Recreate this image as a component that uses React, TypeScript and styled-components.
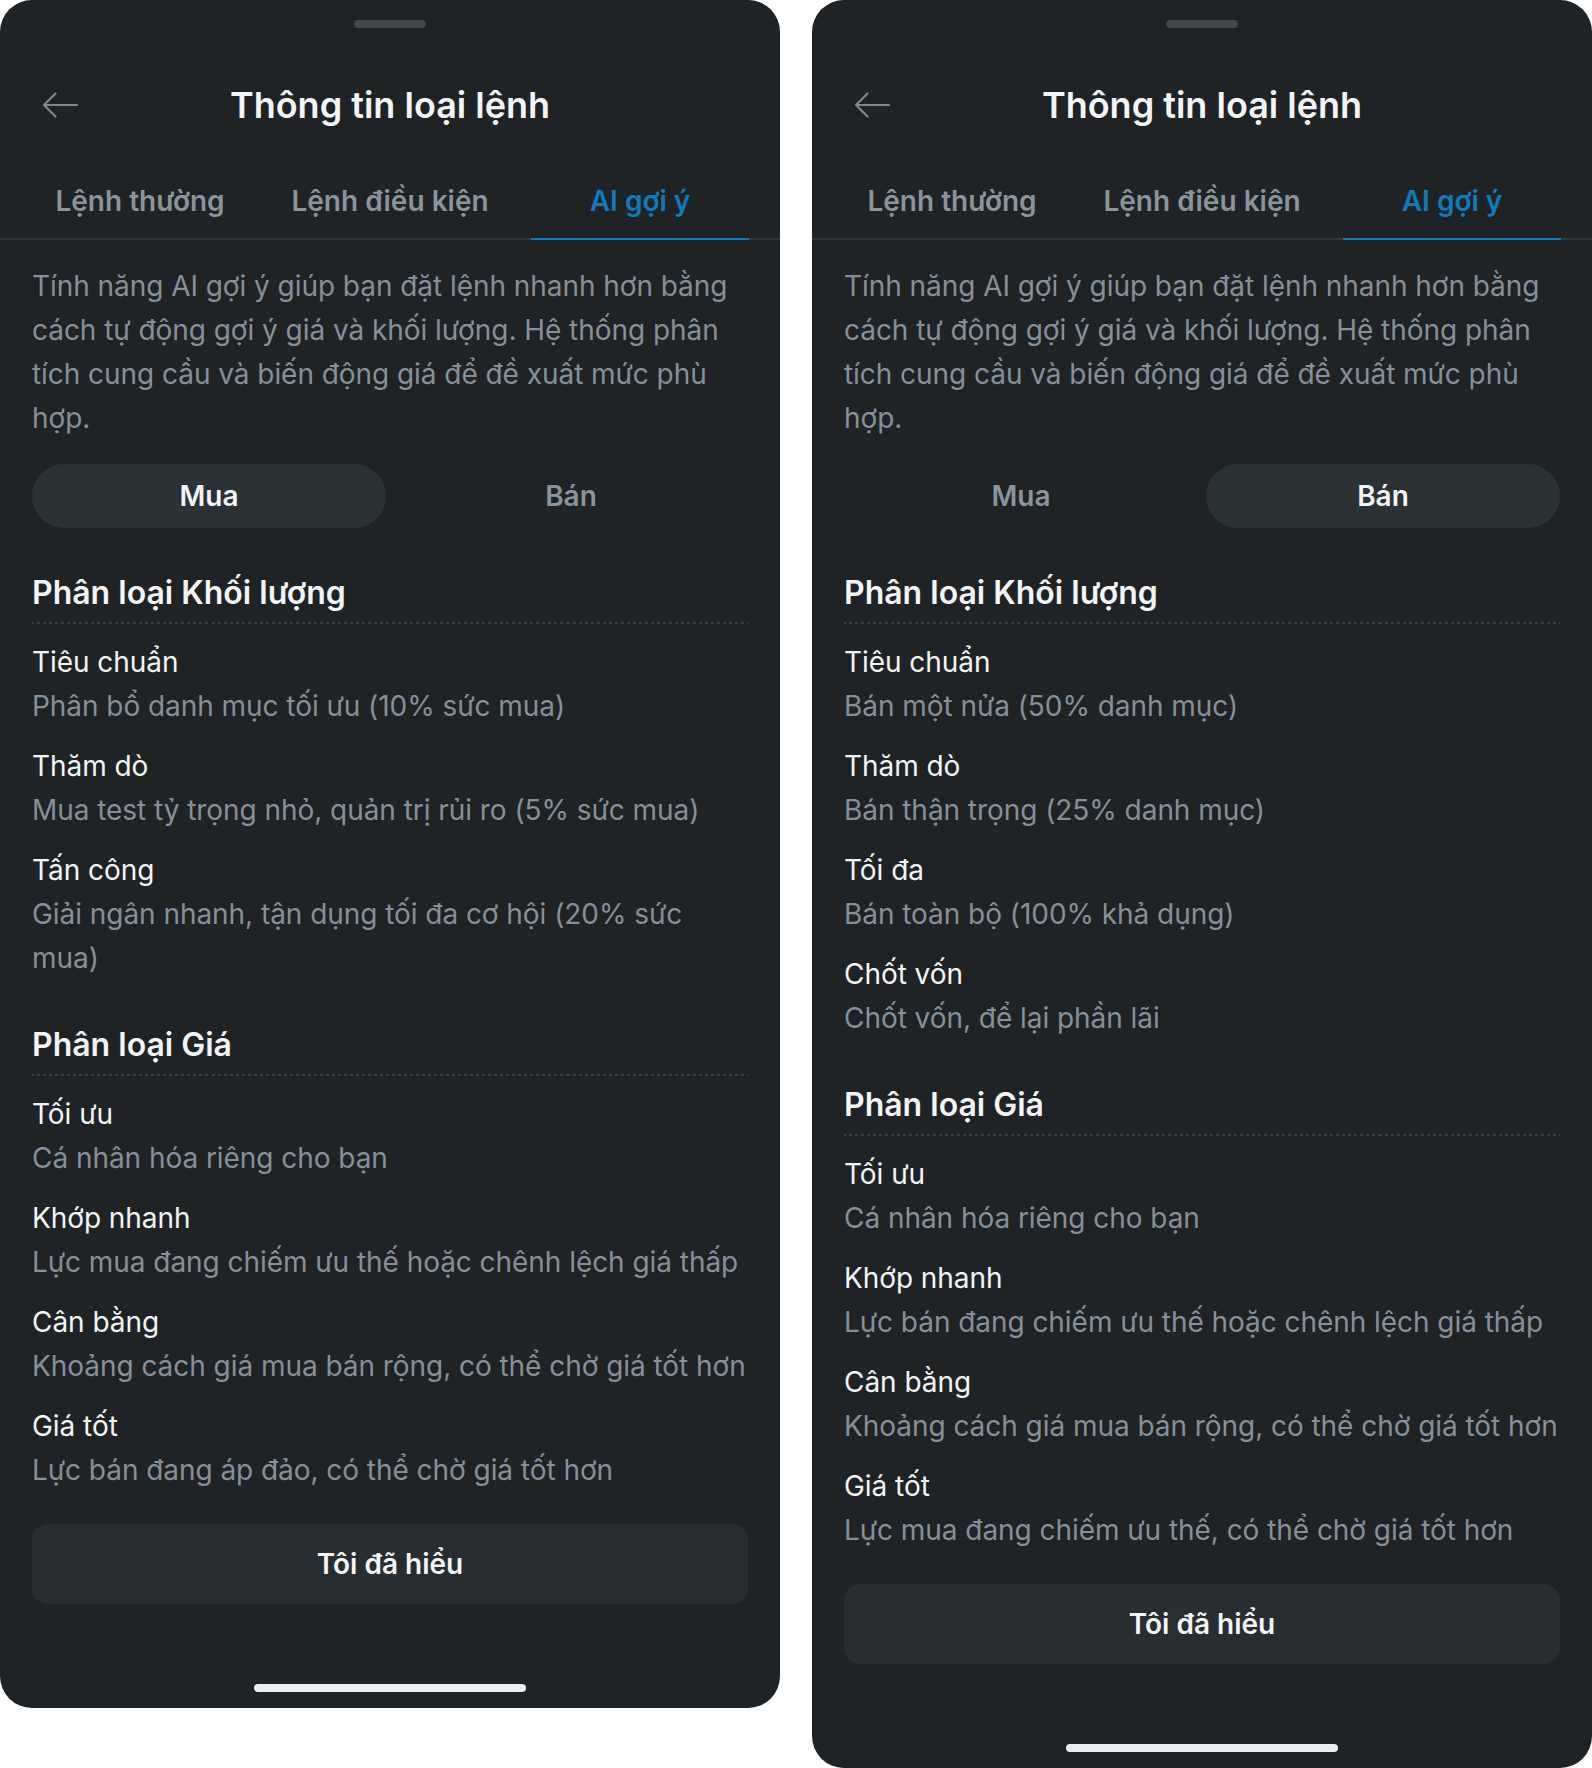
import { styled, createGlobalStyle } from "styled-components";

const GlobalStyle = createGlobalStyle`
  body {
    margin: 0;
    background: #ffffff;
    font-family: Inter, "Noto Sans", "Liberation Sans", sans-serif;
    -webkit-font-smoothing: antialiased;
  }
`;

const Page = styled.div`
  display: flex;
  gap: 32px;
  align-items: flex-start;
`;

const Sheet = styled.div`
  width: 780px;
  background: #1f2326;
  border-radius: 32px;
  display: flex;
  flex-direction: column;
  padding-bottom: 16px;
`;

const Handle = styled.div`
  width: 72px;
  height: 8px;
  border-radius: 4px;
  background: #40474d;
  margin: 20px auto 0;
`;

const Header = styled.div`
  height: 154px;
  display: grid;
  grid-template-columns: 1fr auto 1fr;
  align-items: center;
`;

const BackButton = styled.div`
  padding-left: 42px;
  display: flex;
  align-items: center;
  color: #7d8890;
`;

const Title = styled.h1`
  margin: 0;
  font-size: 36px;
  line-height: 44px;
  font-weight: 600;
  color: #f2f4f5;
`;

const Tabs = styled.div`
  display: grid;
  grid-template-columns: repeat(3, 1fr);
  padding: 0 15px;
  border-bottom: 2px solid #30363a;
`;

const Tab = styled.div<{ $active?: boolean }>`
  position: relative;
  text-align: center;
  padding: 2px 0 20px;
  font-size: 28px;
  line-height: 34px;
  font-weight: 600;
  color: ${(p) => (p.$active ? "#1479b8" : "#8a949c")};

  &::after {
    content: "";
    display: ${(p) => (p.$active ? "block" : "none")};
    position: absolute;
    left: 16px;
    right: 16px;
    bottom: -2px;
    height: 2px;
    background: #1479b8;
  }
`;

const Body = styled.div`
  padding: 24px 32px 0;
  display: flex;
  flex-direction: column;
`;

const Intro = styled.p`
  margin: 0;
  font-size: 28px;
  line-height: 44px;
  letter-spacing: -0.05px;
  color: #85909a;
`;

const Segment = styled.div`
  margin-top: 24px;
  display: grid;
  grid-template-columns: 1fr 1fr;
  gap: 8px;
`;

const SegmentItem = styled.div<{ $active?: boolean }>`
  height: 64px;
  border-radius: 32px;
  display: flex;
  align-items: center;
  justify-content: center;
  font-size: 28px;
  font-weight: 600;
  background: ${(p) => (p.$active ? "#2b3236" : "transparent")};
  color: ${(p) => (p.$active ? "#f2f4f5" : "#8a949c")};
`;

const Section = styled.section`
  margin-top: 45px;
`;

const SectionTitle = styled.h2`
  margin: 0;
  font-size: 32px;
  line-height: 40px;
  font-weight: 600;
  color: #f2f4f5;
  padding-bottom: 9px;
  border-bottom: 2px dashed transparent;
  border-image: repeating-linear-gradient(
      to right,
      #3a4147 0 3px,
      transparent 3px 6px
    )
    1;
`;

const ItemList = styled.div`
  margin-top: 16px;
  display: flex;
  flex-direction: column;
  gap: 16px;
`;

const Item = styled.div`
  display: flex;
  flex-direction: column;
`;

const ItemName = styled.div`
  font-size: 28px;
  line-height: 44px;
  letter-spacing: -0.05px;
  color: #f2f4f5;
`;

const ItemDesc = styled.div`
  font-size: 28px;
  line-height: 44px;
  letter-spacing: -0.05px;
  color: #85909a;
`;

const ConfirmButton = styled.button`
  margin-top: 32px;
  height: 80px;
  width: 100%;
  border: none;
  border-radius: 16px;
  background: #272d31;
  color: #f2f4f5;
  font-family: inherit;
  font-size: 28px;
  font-weight: 600;
`;

const HomeIndicator = styled.div`
  width: 272px;
  height: 8px;
  border-radius: 4px;
  background: #e9edf0;
  margin: 80px auto 0;
`;

type Entry = [string, string];

const volumeBuy: Entry[] = [
  ["Tiêu chuẩn", "Phân bổ danh mục tối ưu (10% sức mua)"],
  ["Thăm dò", "Mua test tỷ trọng nhỏ, quản trị rủi ro (5% sức mua)"],
  ["Tấn công", "Giải ngân nhanh, tận dụng tối đa cơ hội (20% sức mua)"],
];

const volumeSell: Entry[] = [
  ["Tiêu chuẩn", "Bán một nửa (50% danh mục)"],
  ["Thăm dò", "Bán thận trọng (25% danh mục)"],
  ["Tối đa", "Bán toàn bộ (100% khả dụng)"],
  ["Chốt vốn", "Chốt vốn, để lại phần lãi"],
];

const priceBuy: Entry[] = [
  ["Tối ưu", "Cá nhân hóa riêng cho bạn"],
  ["Khớp nhanh", "Lực mua đang chiếm ưu thế hoặc chênh lệch giá thấp"],
  ["Cân bằng", "Khoảng cách giá mua bán rộng, có thể chờ giá tốt hơn"],
  ["Giá tốt", "Lực bán đang áp đảo, có thể chờ giá tốt hơn"],
];

const priceSell: Entry[] = [
  ["Tối ưu", "Cá nhân hóa riêng cho bạn"],
  ["Khớp nhanh", "Lực bán đang chiếm ưu thế hoặc chênh lệch giá thấp"],
  ["Cân bằng", "Khoảng cách giá mua bán rộng, có thể chờ giá tốt hơn"],
  ["Giá tốt", "Lực mua đang chiếm ưu thế, có thể chờ giá tốt hơn"],
];

function BackArrow() {
  return (
    <svg width="36" height="26" viewBox="0 0 36 26" fill="none">
      <path
        d="M13.5 1.5 L2 13 L13.5 24.5 M2 13 H35"
        stroke="currentColor"
        strokeWidth="2.2"
        strokeLinecap="round"
        strokeLinejoin="round"
      />
    </svg>
  );
}

function Group({ title, items }: { title: string; items: Entry[] }) {
  return (
    <Section>
      <SectionTitle>{title}</SectionTitle>
      <ItemList>
        {items.map(([name, desc]) => (
          <Item key={name}>
            <ItemName>{name}</ItemName>
            <ItemDesc>{desc}</ItemDesc>
          </Item>
        ))}
      </ItemList>
    </Section>
  );
}

function InfoSheet({ side }: { side: "buy" | "sell" }) {
  const buy = side === "buy";
  return (
    <Sheet>
      <Handle />
      <Header>
        <BackButton>
          <BackArrow />
        </BackButton>
        <Title>Thông tin loại lệnh</Title>
        <div />
      </Header>
      <Tabs>
        <Tab>Lệnh thường</Tab>
        <Tab>Lệnh điều kiện</Tab>
        <Tab $active>AI gợi ý</Tab>
      </Tabs>
      <Body>
        <Intro>
          Tính năng AI gợi ý giúp bạn đặt lệnh nhanh hơn bằng cách tự động gợi
          ý giá và khối lượng. Hệ thống phân tích cung cầu và biến động giá để
          đề xuất mức phù hợp.
        </Intro>
        <Segment>
          <SegmentItem $active={buy}>Mua</SegmentItem>
          <SegmentItem $active={!buy}>Bán</SegmentItem>
        </Segment>
        <Group title="Phân loại Khối lượng" items={buy ? volumeBuy : volumeSell} />
        <Group title="Phân loại Giá" items={buy ? priceBuy : priceSell} />
        <ConfirmButton>Tôi đã hiểu</ConfirmButton>
      </Body>
      <HomeIndicator />
    </Sheet>
  );
}

export default function App() {
  return (
    <>
      <GlobalStyle />
      <Page>
        <InfoSheet side="buy" />
        <InfoSheet side="sell" />
      </Page>
    </>
  );
}
